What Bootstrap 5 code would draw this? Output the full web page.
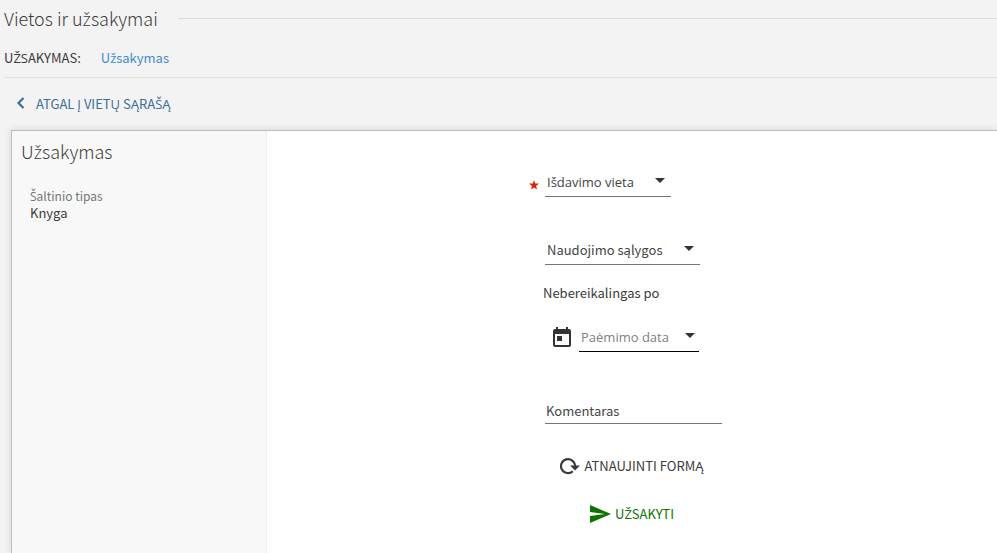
<!DOCTYPE html>
<html lang="lt">
<head>
<meta charset="utf-8">
<meta name="viewport" content="width=device-width, initial-scale=1">
<title>Vietos ir užsakymai</title>
<link href="https://cdn.jsdelivr.net/npm/bootstrap@5.3.0/dist/css/bootstrap.min.css" rel="stylesheet">
<style>
  body { background: #f3f3f3; color: #3a3a3a; font-family: "Source Sans Pro", "Noto Sans CJK SC", "Noto Sans", sans-serif; font-size: 13px; line-height: 20px; overflow: hidden; }
  .lt { font-family: "Open Sans", sans-serif; line-height: 1; }
  .section-title { font-size: 18px; font-weight: 300; line-height: 24px; padding: 6px 0 0 4px; gap: 20px; }
  .title-rule { height: 1px; background: #dcdcdc; }
  .order-bar { margin-left: 4px; padding: 18px 0 9px; gap: 20px; border-bottom: 1px solid #e0e0e0; }
  .order-bar a { color: #428bca; }
  .back-link { color: #3c6e96; gap: 9px; padding: 16px 0 16px 14px; }
  .panel { margin-left: 11px; background: #fff; border: solid #bdbdbd; border-width: 1px 0 0 1px; box-shadow: 0 0 8px rgba(0,0,0,.12); }
  .side { flex: 0 0 255px; background: #f8f8f8; border-right: 1px solid #eee; padding: 8px 9px; }
  .side h2 { font-size: 18px; font-weight: 300; line-height: 24px; margin-bottom: 24px; }
  .side dl { padding-left: 9px; line-height: 17px; }
  .side dt { font-size: 12px; font-weight: 400; color: #757575; }
  .order-form { width: 178px; padding-top: 38px; }
  .line-field { font: inherit; line-height: 20px; height: 28px; color: #444; border: 0; border-bottom: 1px solid #757575; border-radius: 0; background: transparent; padding: 0 2px; outline: 0; }
  .line-field::placeholder { color: #444; opacity: 1; }
  .line-field.alt-face { font-family: "Open Sans", sans-serif; }
  .pick { appearance: none; padding-bottom: 2px; background: url("data:image/svg+xml,%3Csvg xmlns='http://www.w3.org/2000/svg' width='10' height='5'%3E%3Cpath d='M0 0h10L5 5z' fill='%23333'/%3E%3C/svg%3E") no-repeat right 6px top 9px; }
  .required-row { margin-left: -14px; gap: 6px; margin-bottom: 40px; }
  .place { width: 126px; }
  .terms { width: 155px; margin: 0 0 18px 2px; }
  .date-row { padding-left: 9px; gap: 7px; margin: 20px 0 44px; }
  .date-box { width: 120px; border-bottom: 1px solid #000; }
  .date-box .line-field { border: 0; }
  .date-box .line-field::placeholder { color: #808080; }
  .note { margin-left: 2px; width: 177px; padding: 2px 1px 0; }
  .action { font-size: 13px; line-height: 20px; color: #3a3a3a; gap: 4px; }
  .reset { margin-top: 32px; }
  .send, .send:hover { color: #0b7500; margin-top: 28px; }
</style>
</head>
<body class="min-vh-100 d-flex flex-column">
<header>
  <h1 class="section-title d-flex align-items-center m-0"><span>Vietos ir u<span class="lt">ž</span>sakymai</span><span class="title-rule flex-grow-1"></span></h1>
  <div class="order-bar d-flex"><span>U<span class="lt">ŽS</span>AKYMAS:</span><a class="text-decoration-none" href="#order">U<span class="lt">ž</span>sakymas</a></div>
  <a class="back-link d-inline-flex align-items-center text-decoration-none" href="#locations">
    <svg width="13" height="14" viewBox="0 0 13 14" fill="none" stroke="currentColor" stroke-width="2.200" aria-hidden="true"><path d="M9.500 1 4.500 6 9.500 11"/></svg>
    <span>ATGAL <span class="lt">Į</span> VIET<span class="lt">Ų</span> SĄRA<span class="lt">Š</span>Ą</span></a>
</header>
<main class="panel d-flex flex-grow-1" id="order">
  <aside class="side">
    <h2>U<span class="lt">ž</span>sakymas</h2>
    <dl class="m-0"><dt><span class="lt">Š</span>altinio tipas</dt><dd class="m-0">Knyga</dd></dl>
  </aside>
  <div class="flex-grow-1 d-flex justify-content-center">
    <form class="order-form">
      <div class="required-row d-flex align-items-center">
        <svg width="10" height="13" viewBox="0 -3 10 13" fill="#e02000" aria-hidden="true"><path d="M5 0 6.200 3.500 10 3.600 7 5.900 8.100 9.600 5 7.400 1.900 9.600 3 5.900 0 3.600 3.800 3.500z"/></svg>
        <select class="line-field alt-face pick place" aria-label="Išdavimo vieta" required><option>Išdavimo vieta</option></select>
      </div>
      <select class="line-field pick terms d-block" aria-label="Naudojimo sąlygos"><option>Naudojimo sąlygos</option></select>
      <label class="d-block" for="until">Nebereikalingas po</label>
      <div class="date-row d-flex align-items-center">
        <svg width="20" height="22" viewBox="0 0 20 22" fill="#333" aria-hidden="true"><path fill-rule="evenodd" d="M4 0h2v2h8V0h2v2h1a2 2 0 0 1 2 2v14a2 2 0 0 1-2 2H3a2 2 0 0 1-2-2V4a2 2 0 0 1 2-2h1zM3 7v11h14V7zM5 9h5v5H5z"/></svg>
        <div class="date-box d-flex align-items-center">
          <input class="line-field alt-face flex-grow-1 w-100" id="until" type="text" placeholder="Paėmimo data">
          <button class="btn border-0 p-0 d-flex me-1 mb-1" type="button" aria-label="Atidaryti kalendorių"><svg width="10" height="5" viewBox="0 0 10 5" fill="#333"><path d="M0 0h10L5 5z"/></svg></button>
        </div>
      </div>
      <input class="line-field note d-block" type="text" placeholder="Komentaras" aria-label="Komentaras">
      <button class="action reset btn border-0 p-0 d-flex align-items-center mx-auto" type="reset">
        <svg width="20" height="18" viewBox="0 0 20 18" aria-hidden="true"><path d="M12.800 14.200A7 7 0 1 1 15 9" fill="none" stroke="currentColor" stroke-width="2.200"/><path d="M10 8.500h10L15 13.500z" fill="currentColor"/></svg>
        ATNAUJINTI FORMĄ</button>
      <button class="action send btn border-0 p-0 d-flex align-items-center mx-auto" type="submit">
        <svg width="21" height="18" viewBox="0 0 21 18" fill="currentColor" aria-hidden="true"><path d="M0 0 21 9 0 18V11L15 9 0 7z"/></svg>
        <span>U<span class="lt">Ž</span>SAKYTI</span></button>
    </form>
  </div>
</main>
<script src="https://cdn.jsdelivr.net/npm/bootstrap@5.3.0/dist/js/bootstrap.bundle.min.js"></script>
</body>
</html>
